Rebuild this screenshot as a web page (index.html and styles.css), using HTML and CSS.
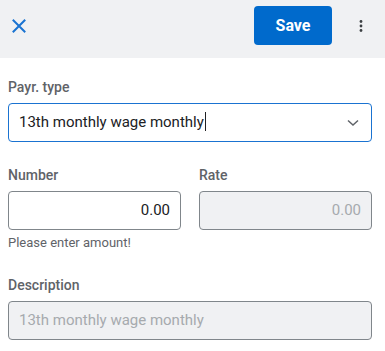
FILE: index.html
```html
<!DOCTYPE html>
<html>
<head>
<meta charset="utf-8">
<link rel="stylesheet" href="styles.css">
</head>
<body>
<header class="topbar">
  <button class="icon-btn close-btn" aria-label="Close">
    <svg width="14" height="14" viewBox="0 0 14 14"><path d="M1.5 1.5 L12.5 12.5 M12.5 1.5 L1.5 12.5" stroke="#1a73d1" stroke-width="2" stroke-linecap="square" fill="none"/></svg>
  </button>
  <div class="spacer"></div>
  <button class="save-btn">Save</button>
  <button class="icon-btn more-btn" aria-label="More">
    <svg width="4" height="14" viewBox="0 0 4 14"><circle cx="2" cy="2.5" r="1.4" fill="#3c4043"/><circle cx="2" cy="7" r="1.4" fill="#3c4043"/><circle cx="2" cy="11.5" r="1.4" fill="#3c4043"/></svg>
  </button>
</header>
<main class="form">
  <div class="field">
    <div class="label">Payr. type</div>
    <div class="input select focused">
      <span class="value">13th monthly wage monthly<span class="caret"></span></span>
      <svg class="chevron" width="12" height="8" viewBox="0 0 12 8"><path d="M1 1.5 L6 6 L11 1.5" stroke="#5f6368" stroke-width="1.5" fill="none"/></svg>
    </div>
  </div>
  <div class="row">
    <div class="field col">
      <div class="label">Number</div>
      <div class="input num">0.00</div>
      <div class="help">Please enter amount!</div>
    </div>
    <div class="field col">
      <div class="label">Rate</div>
      <div class="input num disabled">0.00</div>
    </div>
  </div>
  <div class="field desc">
    <div class="label">Description</div>
    <div class="input disabled">13th monthly wage monthly</div>
  </div>
</main>
</body>
</html>
```
FILE: styles.css
```css
* { box-sizing: border-box; }
html, body { margin: 0; padding: 0; background: #ffffff; }
body {
  font-family: Roboto, "Noto Sans", sans-serif;
  color: #202124;
  width: 385px;
  height: 351px;
  overflow: hidden;
}
.topbar {
  height: 58px;
  background: #f0f1f3;
  display: flex;
  align-items: flex-start;
  padding: 6px 0 0 0;
}
.icon-btn {
  border: none;
  background: transparent;
  padding: 0;
  display: flex;
  align-items: center;
  justify-content: center;
  cursor: pointer;
}
.close-btn {
  width: 14px;
  height: 14px;
  margin: 13px 0 0 12px;
}
.spacer { flex: 1; }
.save-btn {
  width: 78px;
  height: 39px;
  border: none;
  border-radius: 4px;
  background: #006acc;
  color: #ffffff;
  font-family: Roboto, sans-serif;
  font-weight: 700;
  font-size: 16px;
  padding: 0;
  margin-right: 27px;
}
.more-btn {
  width: 4px;
  height: 14px;
  margin: 13px 22px 0 0;
}
.form {
  padding: 19px 13px 0 8px;
}
.label {
  font-size: 14px;
  font-weight: 500;
  color: #5f6368;
  line-height: 20px;
  height: 20px;
  margin-bottom: 6px;
}
.input {
  height: 39px;
  border: 1px solid #80868b;
  border-radius: 4px;
  padding: 0 10px;
  font-size: 15px;
  line-height: 37px;
  color: #202124;
  display: flex;
  align-items: center;
  white-space: nowrap;
}
.select.focused {
  border-color: #1a73d1;
}
.select .value { flex: 1; }
.caret {
  display: inline-block;
  width: 1px;
  height: 19px;
  background: #202124;
  vertical-align: -4px;
  margin-left: 1px;
}
.chevron { margin-right: 2px; }
.row {
  display: grid;
  grid-template-columns: 1fr 1fr;
  column-gap: 18px;
  margin-top: 23px;
}
.num { justify-content: flex-end; }
.disabled {
  background: #f0f1f3;
  color: #a6aaae;
}
.help {
  font-size: 13px;
  color: #5f6368;
  line-height: 16px;
  margin-top: 5px;
}
.desc { margin-top: 24px; }
```
